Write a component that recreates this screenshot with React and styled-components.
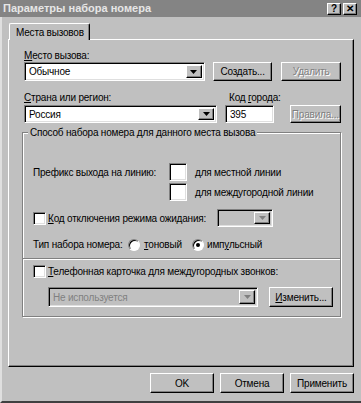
import React from 'react'
import styled, { createGlobalStyle, css } from 'styled-components'

const GlobalStyle = createGlobalStyle`
  body {
    margin: 0;
    background: #c0c0c0;
    font-family: "Liberation Sans", Arial, sans-serif;
    font-size: 10px;
    letter-spacing: -0.2px;
    color: #000;
  }
`

const raised = css`
  border-top: 1px solid #fff;
  border-left: 1px solid #fff;
  border-right: 1px solid #000;
  border-bottom: 1px solid #000;
  box-shadow: inset -1px -1px 0 #808080;
`

const sunken = css`
  border-top: 1px solid #808080;
  border-left: 1px solid #808080;
  border-right: 1px solid #fff;
  border-bottom: 1px solid #fff;
  box-shadow: inset 1px 1px 0 #000, inset -1px -1px 0 #dfdfdf;
`

const Window = styled.div`
  width: 361px;
  height: 403px;
  box-sizing: border-box;
  background: #c0c0c0;
  border-left: 2px solid #dfdfdf;
  border-bottom: 2px solid #404040;
  display: flex;
  flex-direction: column;
  line-height: 13px;
`

const TitleBar = styled.div`
  height: 17px;
  margin-left: -2px;
  background: #848484;
  color: #e6e6e6;
  font-size: 11px;
  letter-spacing: 0;
  font-weight: bold;
  display: flex;
  align-items: center;
  padding: 0 4px 0 3px;
`

const TitleText = styled.span`
  flex: 1;
`

const CaptionButton = styled.div`
  width: 12px;
  height: 10px;
  ${raised};
  background: #c0c0c0;
  color: #000;
  font-size: 10px;
  line-height: 10px;
  text-align: center;
  margin-left: ${p => p.$gap || 0}px;
`

const Body = styled.div`
  padding: 6px 0 0 6px;
  display: flex;
  flex-direction: column;
`

const Tab = styled.div`
  position: relative;
  z-index: 1;
  width: 81px;
  height: 17px;
  box-sizing: border-box;
  margin-left: 1px;
  margin-bottom: -1px;
  background: #c0c0c0;
  border-top: 1px solid #fff;
  border-left: 1px solid #fff;
  border-right: 1px solid #000;
  border-radius: 2px 2px 0 0;
  box-shadow: inset -1px 0 0 #808080;
  padding: 2px 0 0 6px;
  white-space: nowrap;
`

const Panel = styled.div`
  width: 346px;
  height: 328px;
  box-sizing: border-box;
  border-top: 1px solid #fff;
  border-left: 1px solid #fff;
  border-right: 1px solid #000;
  border-bottom: 1px solid #000;
  box-shadow: inset -1px -1px 0 #808080;
  padding: 9px 12px 0 15px;
  display: flex;
  flex-direction: column;
`

const Label = styled.div`
  height: 13px;
  white-space: nowrap;
  padding-left: ${p => p.$pl || 0}px;
`

const U = styled.span`
  text-decoration: underline;
`

const Row = styled.div`
  display: flex;
  align-items: ${p => p.$align || 'center'};
  margin-top: ${p => p.$mt || 0}px;
  height: ${p => (p.$h ? `${p.$h}px` : 'auto')};
`

const Column = styled.div`
  display: flex;
  flex-direction: column;
  margin-left: ${p => p.$ml || 0}px;
  gap: 1px;
`

const Field = styled.div`
  width: ${p => p.$w}px;
  height: ${p => p.$h || 18}px;
  box-sizing: border-box;
  ${sunken};
  background: ${p => (p.$disabled ? '#c0c0c0' : '#fff')};
  color: ${p => (p.$disabled ? '#808080' : '#000')};
  display: flex;
  align-items: center;
  padding: 2px;
  margin-left: ${p => p.$ml || 0}px;
  white-space: nowrap;
`

const FieldText = styled.span`
  flex: 1;
  padding-left: 2px;
`

const ArrowBox = styled.div`
  width: 16px;
  height: 100%;
  box-sizing: border-box;
  ${raised};
  background: #c0c0c0;
  display: flex;
  align-items: center;
  justify-content: center;
`

const Button = styled.div`
  width: ${p => p.$w || 60}px;
  height: ${p => p.$h || 19}px;
  box-sizing: border-box;
  ${raised};
  background: #c0c0c0;
  display: flex;
  align-items: center;
  justify-content: center;
  margin-left: ${p => p.$ml || 0}px;
  white-space: nowrap;
  color: ${p => (p.$disabled ? '#808080' : '#000')};
  text-shadow: ${p => (p.$disabled ? '1px 1px 0 #fff' : 'none')};
`

const Group = styled.div`
  position: relative;
  width: 319px;
  margin: 9px 0 0 -2px;
  box-sizing: border-box;
  border: 1px solid #808080;
  box-shadow: 1px 1px 0 #fff, inset 1px 1px 0 #fff;
`

const Legend = styled.span`
  position: absolute;
  top: -7px;
  left: 5px;
  padding: 0 2px;
  background: #c0c0c0;
  white-space: nowrap;
`

const Section = styled.div`
  display: flex;
  flex-direction: column;
  padding: ${p => p.$pad};
`

const PrefixGrid = styled.div`
  display: grid;
  grid-template-columns: 128px 18px auto;
  grid-template-rows: 18px 18px;
  column-gap: 8px;
  row-gap: 2px;
  align-items: center;
`

const Divider = styled.div`
  margin-top: 7px;
  border-top: 1px solid #808080;
  border-bottom: 1px solid #fff;
`

const Check = styled.div`
  width: 13px;
  height: 13px;
  box-sizing: border-box;
  ${sunken};
  background: #fff;
  flex: none;
`

const Radio = styled.div`
  position: relative;
  width: 12px;
  height: 12px;
  box-sizing: border-box;
  border-radius: 50%;
  border: 1px solid;
  border-color: #808080 #fff #fff #808080;
  box-shadow: inset 1px 1px 0 #000;
  background: #fff;
  flex: none;

  &::after {
    content: '';
    display: ${p => (p.$on ? 'block' : 'none')};
    position: absolute;
    left: 3px;
    top: 3px;
    width: 4px;
    height: 4px;
    border-radius: 50%;
    background: #000;
  }
`

const Text = styled.span`
  margin-left: ${p => p.$ml || 0}px;
  width: ${p => (p.$w ? `${p.$w}px` : 'auto')};
  white-space: nowrap;
  flex: none;
`

const Footer = styled.div`
  display: flex;
  justify-content: flex-end;
  margin-top: 6px;
  padding-right: 7px;
  gap: 6px;
`

function Arrow({ disabled }) {
  return (
    <svg width="7" height="4" viewBox="0 0 7 4">
      <polygon points="0,0 7,0 3.5,4" fill={disabled ? '#808080' : '#000'} />
    </svg>
  )
}

function Combo({ w, h, text, disabled, ml }) {
  return (
    <Field $w={w} $h={h} $ml={ml} $disabled={disabled}>
      <FieldText>{text}</FieldText>
      <ArrowBox>
        <Arrow disabled={disabled} />
      </ArrowBox>
    </Field>
  )
}

export default function App() {
  return (
    <>
      <GlobalStyle />
      <Window>
        <TitleBar>
          <TitleText>Параметры набора номера</TitleText>
          <CaptionButton>?</CaptionButton>
          <CaptionButton $gap={2}>✕</CaptionButton>
        </TitleBar>
        <Body>
          <Tab>Места вызовов</Tab>
          <Panel>
            <Label>
              <U>М</U>есто вызова:
            </Label>
            <Row $h={19}>
              <Combo w={182} h={19} text="Обычное" />
              <Button $w={60} $ml={8}>Создать...</Button>
              <Button $w={60} $ml={9} $disabled>Удалить</Button>
            </Row>
            <Row $mt={10} $align="flex-end">
              <Column>
                <Label>
                  <U>С</U>трана или регион:
                </Label>
                <Combo w={193} h={18} text="Россия" />
              </Column>
              <Column $ml={8}>
                <Label $pl={4}>
                  Код <U>г</U>орода:
                </Label>
                <Field $w={49} $h={18}>
                  <FieldText>395</FieldText>
                </Field>
              </Column>
              <Button $w={59} $h={18} $ml={9} $disabled>Правила...</Button>
            </Row>
            <Group>
              <Legend>Способ набора номера для данного места вызова</Legend>
              <Section $pad="30px 0 0 10px">
                <PrefixGrid>
                  <Text>Префикс выхода на линию:</Text>
                  <Field $w={18} $h={18} />
                  <Text>для местной линии</Text>
                  <span />
                  <Field $w={18} $h={18} />
                  <Text>для междугородной линии</Text>
                </PrefixGrid>
                <Row $mt={8} $h={18}>
                  <Check />
                  <Text $ml={2} $w={169}>
                    <U>К</U>од отключения режима ожидания:
                  </Text>
                  <Combo w={56} h={18} disabled />
                </Row>
                <Row $mt={11} $h={13}>
                  <Text $w={95}>Тип набора номера:</Text>
                  <Radio />
                  <Text $ml={4} $w={48}>
                    <U>т</U>оновый
                  </Text>
                  <Radio $on />
                  <Text $ml={3}>
                    имп<U>у</U>льсный
                  </Text>
                </Row>
              </Section>
              <Divider />
              <Section $pad="5px 0 9px 10px">
                <Row $h={13}>
                  <Check />
                  <Text $ml={2}>
                    <U>Т</U>елефонная карточка для междугородных звонков:
                  </Text>
                </Row>
                <Row $mt={9} $h={20}>
                  <Combo w={210} h={20} ml={15} text="Не используется" disabled />
                  <Button $w={64} $h={20} $ml={11}>
                    <span>
                      <U>И</U>зменить...
                    </span>
                  </Button>
                </Row>
              </Section>
            </Group>
          </Panel>
          <Footer>
            <Button $w={64} $h={20}>OK</Button>
            <Button $w={64} $h={20}>Отмена</Button>
            <Button $w={64} $h={20}>Применить</Button>
          </Footer>
        </Body>
      </Window>
    </>
  )
}
